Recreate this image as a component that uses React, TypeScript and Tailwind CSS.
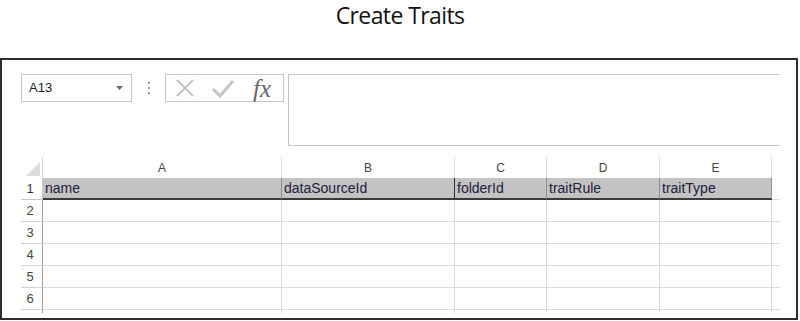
import React from "react";

const cols = [239, 173, 92, 113, 112];
const letters = ["A", "B", "C", "D", "E"];
const row1 = ["name", "dataSourceId", "folderId", "traitRule", "traitType"];

function Corner() {
  return (
    <svg width="22" height="21" viewBox="0 0 22 21">
      <polygon points="19,5 19,19 5,19" fill="#dcdcdc" />
    </svg>
  );
}

export default function App() {
  return (
    <div className="w-[800px] h-[321px] bg-white overflow-hidden" style={{ fontFamily: '"Liberation Sans", Arial, sans-serif' }}>
      <div className="h-[58px] flex justify-center pt-0">
        <span className="text-[23px] text-[#111] tracking-[-0.6px] leading-[30px]" style={{ fontFamily: '"Open Sans", sans-serif', fontWeight: 400 }}>
          Create Traits
        </span>
      </div>
      <div className="w-[798px] h-[262px] border-2 border-[#2e2e2e] pl-[19px] pt-[14px]">
        {/* toolbar */}
        <div className="flex items-start">
          <div className="w-[111px] h-[28px] border border-[#c6c6c6] flex items-center justify-between pl-[7px] pr-[8px]">
            <span className="text-[13px] text-[#222]">A13</span>
            <svg width="7" height="4" viewBox="0 0 7 4"><polygon points="0,0 7,0 3.5,4" fill="#6a6a6a" /></svg>
          </div>
          <div className="w-[33px] h-[28px] flex flex-col items-center justify-center gap-[3px]">
            <div className="w-[2px] h-[2px] bg-[#9a9a9a]" />
            <div className="w-[2px] h-[2px] bg-[#9a9a9a]" />
            <div className="w-[2px] h-[2px] bg-[#9a9a9a]" />
          </div>
          <div className="w-[119px] h-[28px] border border-[#c6c6c6] flex items-center">
            <svg width="22" height="20" viewBox="0 0 22 20" className="ml-[8px]">
              <path d="M3 2 L19 18 M19 2 L3 18" stroke="#c4c4c4" strokeWidth="2" fill="none" />
            </svg>
            <svg width="24" height="20" viewBox="0 0 24 20" className="ml-[15px]">
              <path d="M2 11 L9 18 L22 3" stroke="#c4c4c4" strokeWidth="3" fill="none" />
            </svg>
            <span className="ml-[18px] text-[25px] leading-none text-[#666] italic" style={{ fontFamily: '"Liberation Serif", serif' }}>
              fx
            </span>
          </div>
          <div className="ml-[4px] w-[492px] h-[72px] border-l border-t border-b border-[#c6c6c6]" />
        </div>
        {/* grid */}
        <div className="mt-[11px]">
          {/* header row */}
          <div className="flex h-[21px]">
            <div className="w-[22px] border-r border-[#d8d8d8]"><Corner /></div>
            {cols.map((w, i) => (
              <div key={i} className="h-full border-r border-[#dcdcdc] flex items-center justify-center text-[12px] text-[#444]" style={{ width: w }}>
                {letters[i]}
              </div>
            ))}
          </div>
          {/* row 1 */}
          <div className="flex h-[22px]">
            <div className="w-[22px] border-r border-b border-[#c8c8c8] flex items-center justify-center pr-[3px] text-[13px] text-[#333]">1</div>
            {cols.map((w, i) => (
              <div
                key={i}
                className={`h-full bg-[#c3c3c3] border-b-2 border-b-[#3a3a3a] border-r flex items-center pl-[2px] text-[14px] text-[#1e2040] ${i === 1 ? "border-r-[#333]" : "border-r-[#8f8f8f]"}`}
                style={{ width: w }}
              >
                {row1[i]}
              </div>
            ))}
            <div className="w-[8px] border-b border-[#dcdcdc]" />
          </div>
          {[2, 3, 4, 5, 6].map((n) => (
            <div key={n} className="flex h-[22px]">
              <div className="w-[22px] border-r border-r-[#a0a0a0] border-b border-b-[#d4d4d4] flex items-center justify-center pr-[3px] text-[13px] text-[#444]">
                {n}
              </div>
              {cols.map((w, i) => (
                <div key={i} className="h-full border-r border-b border-[#dadada]" style={{ width: w }} />
              ))}
              <div className="w-[8px] border-b border-[#dadada]" />
            </div>
          ))}
          <div className="flex h-[3px]">
            <div className="w-[22px] border-r border-[#a0a0a0]" />
            {cols.map((w, i) => (
              <div key={i} className="h-full border-r border-[#dadada]" style={{ width: w }} />
            ))}
          </div>
        </div>
      </div>
    </div>
  );
}
